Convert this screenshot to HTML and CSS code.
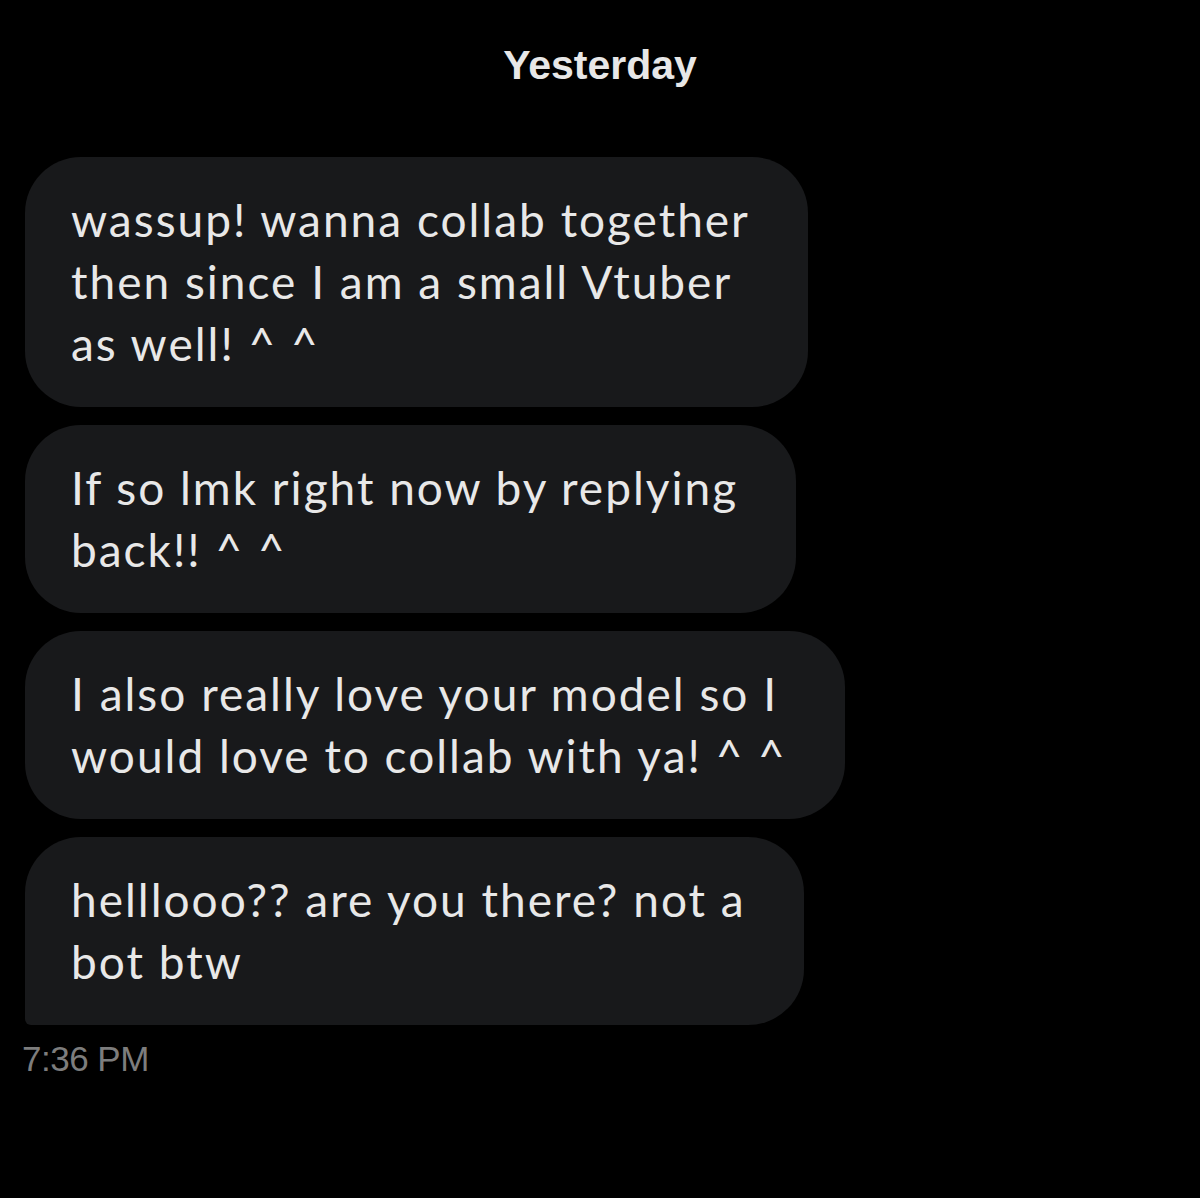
FILE: index.html
```html
<!DOCTYPE html>
<html>
<head>
<meta charset="utf-8">
<link rel="stylesheet" href="styles.css">
</head>
<body>
<main class="chat">
  <div class="day">Yesterday</div>
  <div class="messages">
    <div class="bubble">wassup! wanna collab together<br>then since I am a small Vtuber<br>as well! ^ ^</div>
    <div class="bubble">If so lmk right now by replying<br>back!! ^ ^</div>
    <div class="bubble">I also really love your model so I<br>would love to collab with ya! ^ ^</div>
    <div class="bubble last">helllooo?? are you there? not a<br>bot btw</div>
  </div>
  <div class="time">7:36 PM</div>
</main>
</body>
</html>
```
FILE: styles.css
```css
html, body {
  margin: 0;
  padding: 0;
  background: #000;
}
.chat {
  width: 1200px;
  height: 1198px;
  box-sizing: border-box;
  padding: 40px 0 0 25px;
  display: flex;
  flex-direction: column;
}
.day {
  font-family: "Liberation Sans", Arial, sans-serif;
  font-weight: 700;
  font-size: 41px;
  line-height: 50px;
  color: #e7e7e7;
  text-align: center;
  margin-left: -25px;
}
.messages {
  margin-top: 67px;
  display: flex;
  flex-direction: column;
  align-items: flex-start;
  gap: 18px;
}
.bubble {
  font-family: Lato, "Noto Sans", sans-serif;
  font-size: 46px;
  line-height: 62px;
  letter-spacing: 2px;
  color: #e8e8e8;
  background: #18191b;
  border-radius: 56px;
  padding: 32px 58px 32px 46px;
  white-space: nowrap;
}
.bubble.last {
  border-bottom-left-radius: 6px;
}
.time {
  margin-top: 16px;
  margin-left: -3px;
  font-family: "Liberation Sans", Arial, sans-serif;
  font-size: 35px;
  line-height: 36px;
  color: #7d7d7d;
  letter-spacing: -0.5px;
}
```
